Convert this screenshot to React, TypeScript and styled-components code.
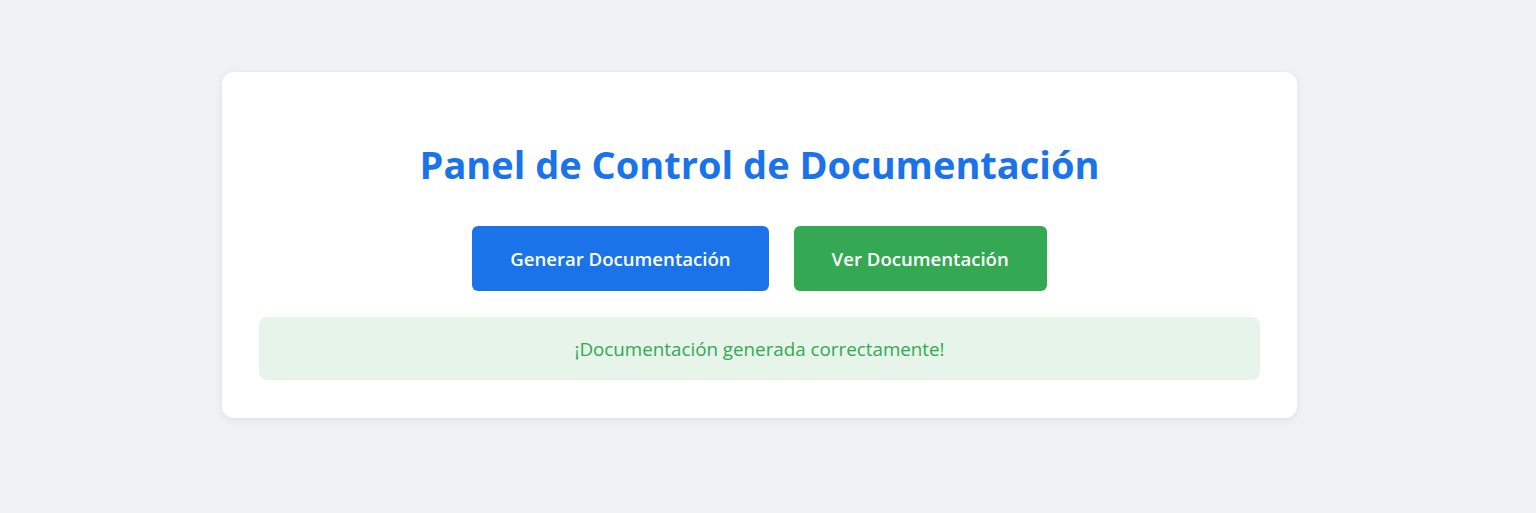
import React from "react";
import styled, { createGlobalStyle } from "styled-components";

const GlobalStyle = createGlobalStyle`
  html, body {
    margin: 0;
    padding: 0;
    background: #f0f2f5;
    font-family: "Open Sans", "Noto Sans", sans-serif;
  }
`;

const Page = styled.main`
  display: flex;
  justify-content: center;
  padding: 72px 17px 72px 0;
`;

const Card = styled.section`
  width: 1075px;
  box-sizing: border-box;
  background: #ffffff;
  border-radius: 12px;
  box-shadow: 0 2px 10px rgba(0, 0, 0, 0.08);
  padding: 38px 37px 38px;
  text-align: center;
`;

const Title = styled.h1`
  margin: 30px 0 38px;
  font-size: 38px;
  line-height: 48px;
  font-weight: 700;
  color: #1a73e8;
`;

const Actions = styled.div`
  display: flex;
  justify-content: center;
  gap: 25px;
  margin-bottom: 26px;
`;

const Button = styled.button<{ $tone: "blue" | "green" }>`
  font-family: inherit;
  border: none;
  border-radius: 6px;
  height: 65px;
  padding: 0 38px;
  font-size: 18.6px;
  font-weight: 600;
  color: #ffffff;
  background: ${(p) => (p.$tone === "blue" ? "#1a73e8" : "#34a853")};
  cursor: pointer;
`;

const Message = styled.div`
  background: #e6f4ea;
  color: #34a853;
  border-radius: 8px;
  height: 63px;
  display: flex;
  align-items: center;
  justify-content: center;
  font-size: 18.8px;
`;

export default function App() {
  return (
    <>
      <GlobalStyle />
      <Page>
        <Card>
          <Title>Panel de Control de Documentación</Title>
          <Actions>
            <Button $tone="blue">Generar Documentación</Button>
            <Button $tone="green">Ver Documentación</Button>
          </Actions>
          <Message>¡Documentación generada correctamente!</Message>
        </Card>
      </Page>
    </>
  );
}
